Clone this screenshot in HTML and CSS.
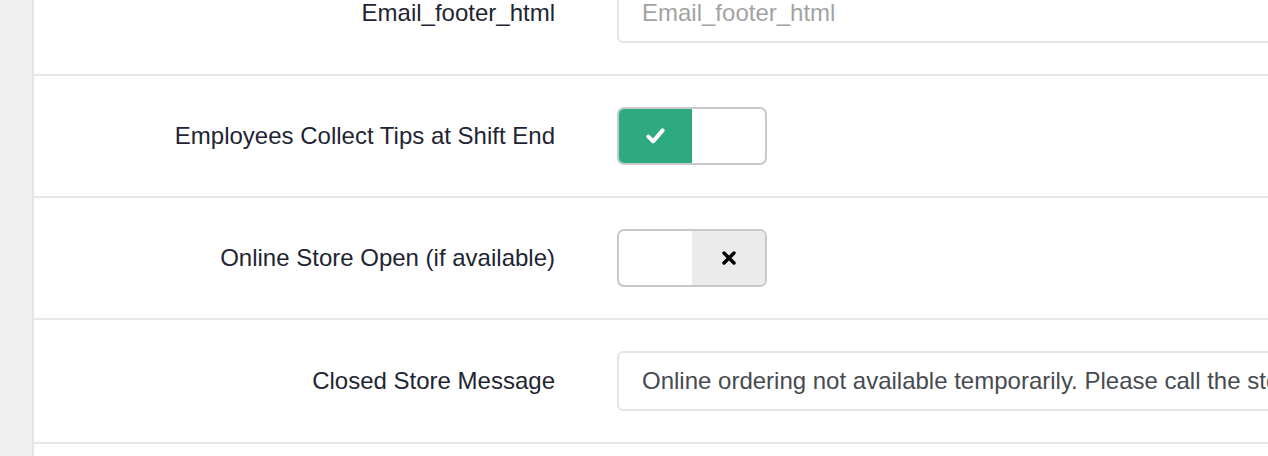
FILE: index.html
```html
<!DOCTYPE html>
<html lang="en">
<head>
<meta charset="utf-8">
<title>Settings</title>
<link rel="stylesheet" href="styles.css">
</head>
<body>
<div class="page">
  <aside class="sidebar"></aside>
  <main class="content">
    <div class="form">
      <div class="row">
        <label class="label" for="footer">Email_footer_html</label>
        <div class="control">
          <input id="footer" class="input" type="text" placeholder="Email_footer_html">
        </div>
      </div>
      <div class="row">
        <div class="label">Employees Collect Tips at Shift End</div>
        <div class="control">
          <div class="toggle">
            <span class="half on">
              <svg width="19" height="18" viewBox="0 0 19 18"><path d="M2.4 9.6 L7.2 14.4 L16.6 3.4" fill="none" stroke="#fff" stroke-width="4" stroke-linecap="round" stroke-linejoin="round"/></svg>
            </span>
            <span class="half"></span>
          </div>
        </div>
      </div>
      <div class="row">
        <div class="label">Online Store Open (if available)</div>
        <div class="control">
          <div class="toggle">
            <span class="half"></span>
            <span class="half off">
              <svg width="14" height="14" viewBox="0 0 14 14"><path d="M2 2 L12 12 M12 2 L2 12" fill="none" stroke="#000" stroke-width="3.4" stroke-linecap="round"/></svg>
            </span>
          </div>
        </div>
      </div>
      <div class="row">
        <label class="label" for="closed">Closed Store Message</label>
        <div class="control">
          <input id="closed" class="input" type="text" value="Online ordering not available temporarily. Please call the store to place your order.">
        </div>
      </div>
    </div>
  </main>
</div>
</body>
</html>
```

FILE: styles.css
```css
html, body {
  margin: 0;
  padding: 0;
  background: #fff;
  overflow: hidden;
}

body {
  font-family: "Liberation Sans", Arial, Helvetica, sans-serif;
  font-size: 24px;
  color: #1f2533;
}

.page {
  display: flex;
  height: 100vh;
}

.sidebar {
  flex: 0 0 32px;
  background: #efefef;
  border-right: 2px solid #e4e4e4;
}

.content {
  flex: 1;
  min-width: 0;
  overflow: hidden;
}

.form {
  margin-top: -48px;
}

.row {
  display: grid;
  grid-template-columns: 521px 1fr;
  column-gap: 62px;
  align-items: center;
  padding: 31px 0;
  border-bottom: 2px solid #e8e8e8;
}

.label {
  text-align: right;
  line-height: 28px;
  color: #1f2533;
}

.control {
  display: flex;
  align-items: center;
}

.input {
  box-sizing: border-box;
  flex: 0 0 900px;
  width: 900px;
  height: 60px;
  padding: 0 23px;
  border: 2px solid #e5e5e5;
  border-radius: 6px;
  font-family: "Liberation Sans", Arial, Helvetica, sans-serif;
  font-size: 24px;
  color: #474b50;
  background: #fff;
  outline: none;
}

.input::placeholder {
  color: #a3a3a3;
}

.toggle {
  box-sizing: border-box;
  display: flex;
  width: 150px;
  height: 58px;
  border: 2px solid #c9c9c9;
  border-radius: 7px;
  overflow: hidden;
  background: #fff;
}

.half {
  flex: 1;
  display: flex;
  align-items: center;
  justify-content: center;
}

.half.on {
  background: #2eaa80;
}

.half.off {
  background: #ebebeb;
}
```
